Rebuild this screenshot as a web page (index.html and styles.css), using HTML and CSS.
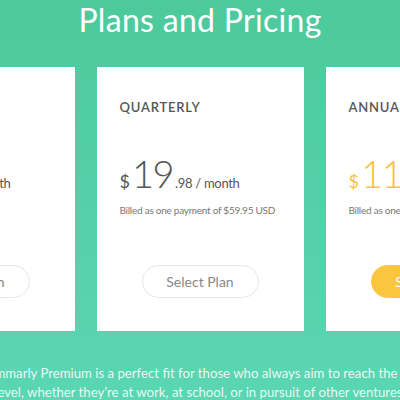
FILE: index.html
```html
<!DOCTYPE html>
<html lang="en">
<head>
  <meta charset="UTF-8">
  <meta name="viewport" content="width=device-width, initial-scale=1">
  <title>Plans and Pricing</title>
  <link rel="stylesheet" href="styles.css">
</head>
<body>

  <h1 class="page-title">Plans and Pricing</h1>

  <div class="plans">
    <div class="plan">
      <div class="plan-name">MONTHLY</div>
      <div class="price">
        <span class="currency">$</span><span class="amount">29</span><span class="cents">.95 / month</span>
      </div>
      <div class="billed">Billed monthly</div>
      <button class="select">Select Plan</button>
    </div>

    <div class="plan">
      <div class="plan-name">QUARTERLY</div>
      <div class="price">
        <span class="currency">$</span><span class="amount">19</span><span class="cents">.98 / month</span>
      </div>
      <div class="billed">Billed as one payment of $59.95 USD</div>
      <button class="select">Select Plan</button>
    </div>

    <div class="plan best">
      <div class="plan-name">ANNUAL</div>
      <div class="price">
        <span class="currency">$</span><span class="amount">11</span><span class="cents">.66 / month</span>
      </div>
      <div class="billed">Billed as one payment of $139.95 USD</div>
      <button class="select">Select Plan</button>
    </div>
  </div>

  <div class="intro">
    <p>Grammarly Premium is a perfect fit for those who always aim to reach the next<br>level, whether they’re at work, at school, or in pursuit of other ventures.</p>
  </div>

</body>
</html>
```

FILE: styles.css
```css
body {
  margin: 0;
  height: 400px;
  overflow: hidden;
  background: linear-gradient(180deg, #4cca9c, #5ad6b3);
  font-family: Lato, 'Open Sans', sans-serif;
  color: #fff;
}

.page-title {
  margin: 0;
  padding-top: 2px;
  font-size: 32px;
  line-height: 36px;
  font-weight: 400;
  text-align: center;
  letter-spacing: 0.3px;
}

.plans {
  display: flex;
  justify-content: center;
  gap: 22px;
  margin-top: 29px;
}

.plan {
  flex: 0 0 207px;
  height: 264px;
  box-sizing: border-box;
  padding: 32px 0 33px 23px;
  background: #fff;
  display: flex;
  flex-direction: column;
  color: #555;
}

.plan-name {
  font-size: 13px;
  font-weight: 600;
  letter-spacing: 0.8px;
  color: #555;
}

.price {
  margin-top: 40px;
  display: flex;
  align-items: baseline;
  white-space: nowrap;
}

.currency {
  font-size: 18px;
  margin-right: 2px;
}

.amount {
  font-size: 38px;
  font-weight: 300;
  line-height: 36px;
  letter-spacing: -1.5px;
}

.cents {
  font-size: 13px;
  letter-spacing: -0.3px;
  margin-left: 2px;
}

.billed {
  margin-top: 12px;
  font-size: 10px;
  letter-spacing: -0.25px;
  color: #777;
  white-space: nowrap;
}

.select {
  margin: auto 0 0 22px;
  width: 117px;
  height: 33px;
  border: 1px solid #e6e6e6;
  border-radius: 17px;
  background: #fff;
  font-family: Lato, sans-serif;
  font-size: 14px;
  color: #888;
}

.best .currency,
.best .amount {
  color: #f8c33c;
}

.best .select {
  background: #fbc53d;
  border-color: #fbc53d;
  color: #fff;
}

.intro {
  display: flex;
  justify-content: center;
  margin-top: 33px;
}

.intro p {
  flex: 0 0 720px;
  margin: 0;
  font-size: 13.2px;
  line-height: 19px;
  text-align: center;
  color: rgba(255, 255, 255, 0.88);
}
```
